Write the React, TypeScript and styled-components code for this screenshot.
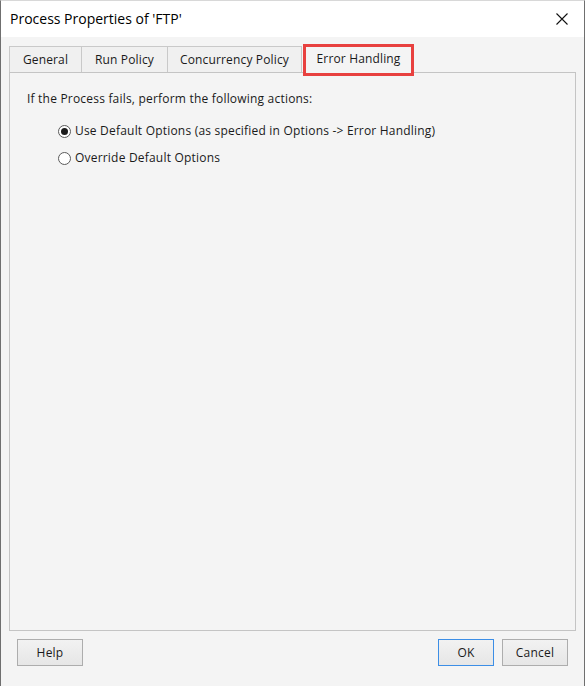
import React from "react";
import styled, { createGlobalStyle, css } from "styled-components";

const Global = createGlobalStyle`
  html, body { margin: 0; padding: 0; background: #ffffff; }
  body { font-family: "Open Sans", "Noto Sans", "Liberation Sans", sans-serif; }
  * { box-sizing: border-box; }
`;

const Window = styled.div`
  width: 585px;
  height: 686px;
  display: flex;
  flex-direction: column;
  border-left: 1px solid #6f6f6f;
  border-right: 1px solid #6f6f6f;
  border-top: 1px solid #d8d8d8;
  overflow: hidden;
`;

const TitleBar = styled.div`
  height: 36px;
  flex: none;
  background: #ffffff;
  display: flex;
  align-items: center;
  justify-content: space-between;
  padding: 0 15px 0 9px;
`;

const Title = styled.div`
  font-size: 14px;
  color: #000;
  padding-bottom: 2px;
`;

const CloseButton = styled.button`
  width: 14px;
  height: 14px;
  padding: 0;
  border: 0;
  background: transparent;
  display: flex;
  align-items: center;
  justify-content: center;
`;

const Body = styled.div`
  flex: 1;
  background: #f4f4f4;
  display: flex;
  flex-direction: column;
  padding: 7px 8px 0 8px;
`;

const TabStrip = styled.div`
  height: 28px;
  display: flex;
  align-items: flex-end;
  padding-left: 1px;
  position: relative;
  z-index: 2;
`;

const Tab = styled.div<{ $active?: boolean }>`
  height: 26px;
  display: flex;
  align-items: center;
  justify-content: center;
  font-size: 12px;
  letter-spacing: 0.15px;
  color: #1a1a1a;
  background: #f0f0f0;
  border: 1px solid #c9c9c9;
  border-bottom: none;
  margin-left: -1px;
  ${(p) =>
    p.$active &&
    css`
      height: 32px;
      margin-bottom: -4px;
      margin-left: 1px;
      background: #f4f4f4;
      border: 3px solid #e8413f;
      padding-bottom: 3px;
    `}
`;

const Panel = styled.div`
  flex: 1;
  border: 1px solid #c4c4c4;
  padding: 17px 17px;
  display: flex;
  flex-direction: column;
`;

const Label = styled.div`
  font-size: 12px;
  letter-spacing: 0.2px;
  color: #1a1a1a;
  line-height: 18px;
`;

const Options = styled.div`
  display: flex;
  flex-direction: column;
  gap: 9px;
  padding: 14px 0 0 31px;
`;

const RadioRow = styled.label`
  display: flex;
  align-items: center;
  gap: 4px;
  font-size: 12px;
  letter-spacing: 0.2px;
  color: #1a1a1a;
  line-height: 18px;
`;

const RadioCircle = styled.span<{ $checked?: boolean }>`
  width: 13px;
  height: 13px;
  border-radius: 50%;
  border: 1px solid #5a5a5a;
  background: #ffffff;
  display: flex;
  align-items: center;
  justify-content: center;
  flex: none;
  &::after {
    content: "";
    width: 7px;
    height: 7px;
    border-radius: 50%;
    background: ${(p) => (p.$checked ? "#1b1b1b" : "transparent")};
  }
`;

const Footer = styled.div`
  height: 55px;
  flex: none;
  display: flex;
  align-items: flex-start;
  padding: 8px 8px 0 8px;
`;

const Button = styled.button<{ $default?: boolean }>`
  height: 27px;
  width: ${(p) => (p.$default ? "56px" : "66px")};
  font-family: inherit;
  font-size: 12px;
  letter-spacing: 0.2px;
  color: #1a1a1a;
  background: linear-gradient(#f2f2f2, #e6e6e6);
  border: 1px solid ${(p) => (p.$default ? "#3c8ee6" : "#adadad")};
  padding: 0;
`;

const Spacer = styled.div`
  flex: 1;
`;

const ButtonGroup = styled.div`
  display: flex;
  gap: 8px;
`;

export default function App() {
  return (
    <>
      <Global />
      <Window>
        <TitleBar>
          <Title>Process Properties of 'FTP'</Title>
          <CloseButton aria-label="Close">
            <svg width="12" height="12" viewBox="0 0 12 12">
              <path d="M0.5 0.5 L11.5 11.5 M11.5 0.5 L0.5 11.5" stroke="#111" strokeWidth="1.1" />
            </svg>
          </CloseButton>
        </TitleBar>
        <Body>
          <TabStrip>
            <Tab style={{ width: 73 }}>General</Tab>
            <Tab style={{ width: 87 }}>Run Policy</Tab>
            <Tab style={{ width: 135 }}>Concurrency Policy</Tab>
            <Tab $active style={{ width: 111 }}>Error Handling</Tab>
          </TabStrip>
          <Panel>
            <Label>If the Process fails, perform the following actions:</Label>
            <Options>
              <RadioRow>
                <RadioCircle $checked />
                Use Default Options (as specified in Options -&gt; Error Handling)
              </RadioRow>
              <RadioRow>
                <RadioCircle />
                Override Default Options
              </RadioRow>
            </Options>
          </Panel>
          <Footer>
            <Button>Help</Button>
            <Spacer />
            <ButtonGroup>
              <Button $default>OK</Button>
              <Button>Cancel</Button>
            </ButtonGroup>
          </Footer>
        </Body>
      </Window>
    </>
  );
}
